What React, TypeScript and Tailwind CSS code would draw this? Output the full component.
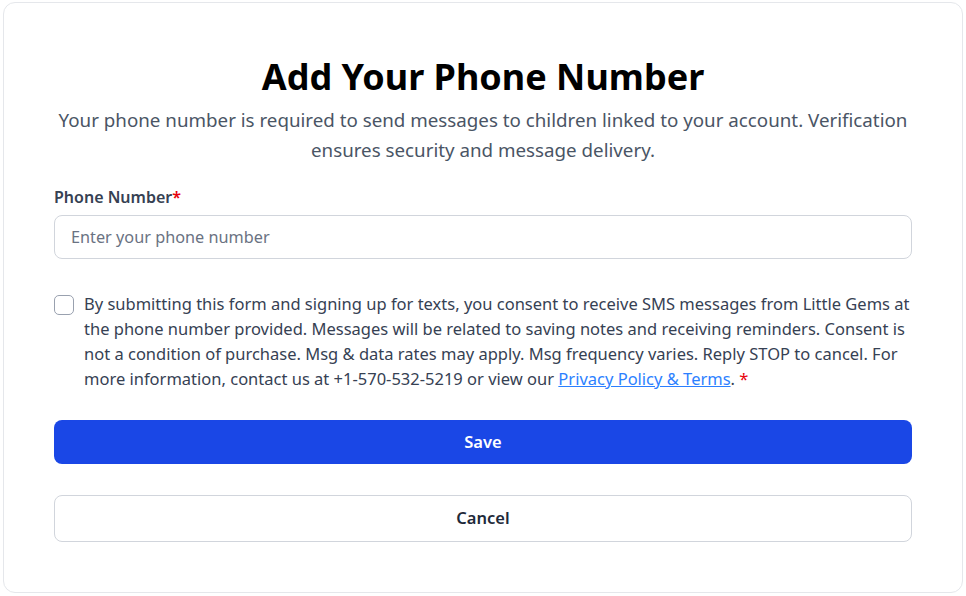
export default function App() {
  return (
    <div className="min-h-screen bg-white px-[3px] pt-[2px] pb-[3px]" style={{ fontFamily: '"Noto Sans", "Open Sans", sans-serif' }}>
      <div className="rounded-xl border border-gray-200 bg-white px-[50px] pt-[52px] pb-[50px]">
        <div className="text-center">
          <h1 className="text-[36px] font-bold leading-[44px] text-black">Add Your Phone Number</h1>
          <p className="mx-auto mt-[6px] text-[18.75px] leading-[30px] text-gray-600">
            Your phone number is required to send messages to children linked to your account. Verification ensures security and message delivery.
          </p>
        </div>

        <div className="mt-[20px]">
          <label className="block text-[16px] font-semibold leading-[24px] text-gray-700">
            Phone Number<span className="text-red-600">*</span>
          </label>
          <input
            type="tel"
            placeholder="Enter your phone number"
            className="mt-[6px] block h-[44px] w-full rounded-lg border border-gray-300 px-4 text-[16.25px] text-gray-800 placeholder:text-gray-500"
          />
        </div>

        <label className="mt-[32px] flex items-start gap-[10px]">
          <input type="checkbox" className="mt-[4px] h-[20px] w-[20px] shrink-0 appearance-none rounded-[5px] border border-gray-400 bg-white" />
          <span className="text-[16.5px] leading-[25px] text-gray-700">
            By submitting this form and signing up for texts, you consent to receive SMS messages from Little Gems at the phone number provided. Messages will be related to saving notes and receiving reminders. Consent is not a condition of purchase. Msg &amp; data rates may apply. Msg frequency varies. Reply STOP to cancel. For more information, contact us at +1-570-532-5219 or view our{" "}
            <a href="#" className="text-blue-500 underline">Privacy Policy &amp; Terms</a>. <span className="text-red-600">*</span>
          </span>
        </label>

        <button className="mt-[29px] flex h-[44px] w-full items-center justify-center rounded-lg bg-[#1a47e6] text-[16.5px] font-semibold text-white">
          Save
        </button>
        <button className="mt-[31px] flex h-[47px] w-full items-center justify-center rounded-lg border border-gray-300 bg-white text-[16.5px] font-semibold text-gray-800">
          Cancel
        </button>
      </div>
    </div>
  );
}
